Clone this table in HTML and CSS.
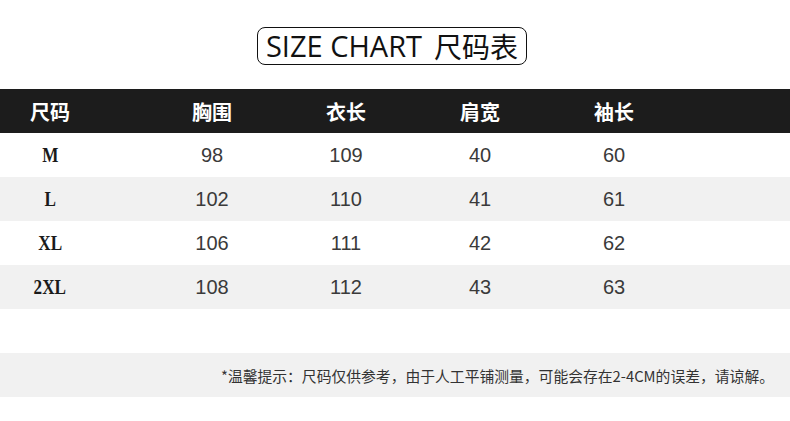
FILE: index.html
```html
<!DOCTYPE html>
<html lang="zh">
<head>
<meta charset="utf-8">
<link rel="stylesheet" href="styles.css">
</head>
<body>
<div class="page">
  <div class="title-wrap">
    <div class="title"><span class="title-en">SIZE CHART</span><span class="title-cn">尺码表</span></div>
  </div>
  <div class="table">
    <div class="row head">
      <div class="c first">尺码</div><div class="c">胸围</div><div class="c">衣长</div><div class="c">肩宽</div><div class="c">袖长</div>
    </div>
    <div class="row">
      <div class="c first"><span class="size">M</span></div><div class="c">98</div><div class="c">109</div><div class="c">40</div><div class="c">60</div>
    </div>
    <div class="row alt">
      <div class="c first"><span class="size">L</span></div><div class="c">102</div><div class="c">110</div><div class="c">41</div><div class="c">61</div>
    </div>
    <div class="row">
      <div class="c first"><span class="size">XL</span></div><div class="c">106</div><div class="c">111</div><div class="c">42</div><div class="c">62</div>
    </div>
    <div class="row alt">
      <div class="c first"><span class="size">2XL</span></div><div class="c">108</div><div class="c">112</div><div class="c">43</div><div class="c">63</div>
    </div>
    <div class="row blank"></div>
    <div class="note">*温馨提示：尺码仅供参考，由于人工平铺测量，可能会存在2-4CM的误差，请谅解。</div>
  </div>
</div>
</body>
</html>
```

FILE: styles.css
```css
html, body {
  margin: 0;
  padding: 0;
  background: #fff;
}
.page {
  width: 790px;
  height: 421px;
  overflow: hidden;
  font-family: "Noto Sans CJK SC", "Noto Sans", sans-serif;
}
.title-wrap {
  display: flex;
  justify-content: center;
  align-items: flex-start;
  padding-top: 27px;
  padding-right: 6px;
  height: 89px;
  box-sizing: border-box;
}
.title {
  width: 270px;
  height: 38px;
  box-sizing: border-box;
  border: 1.5px solid #111;
  border-radius: 8px;
  display: flex;
  align-items: center;
  justify-content: center;
  gap: 12px;
  color: #111;
}
.title-en {
  font-family: "Open Sans", sans-serif;
  font-weight: 500;
  font-size: 29px;
  line-height: 34px;
}
.title-cn {
  font-family: "Noto Sans CJK SC", sans-serif;
  font-weight: 400;
  font-size: 28px;
  line-height: 34px;
}
.row {
  display: grid;
  grid-template-columns: 145px repeat(4, 134px);
  height: 44px;
  align-items: center;
  font-family: "Liberation Sans", "Noto Sans CJK SC", sans-serif;
  font-size: 20px;
  color: #3a3a3a;
}
.row.head {
  background: #1c1c1c;
  color: #fff;
  font-family: "Noto Sans CJK SC", sans-serif;
  font-weight: 700;
  font-size: 20px;
}
.row.alt {
  background: #f1f1f1;
}
.c {
  text-align: center;
}
.c.first {
  padding-right: 45px;
}
.size {
  display: inline-block;
  font-family: "Liberation Serif", serif;
  font-weight: 700;
  font-size: 22px;
  color: #1a1a1a;
  transform: scaleX(0.78);
}
.note {
  height: 44px;
  background: #f1f1f1;
  display: flex;
  align-items: center;
  justify-content: flex-end;
  padding-right: 16px;
  font-family: "Noto Sans CJK SC", sans-serif;
  font-size: 14.8px;
  color: #333;
}
```
